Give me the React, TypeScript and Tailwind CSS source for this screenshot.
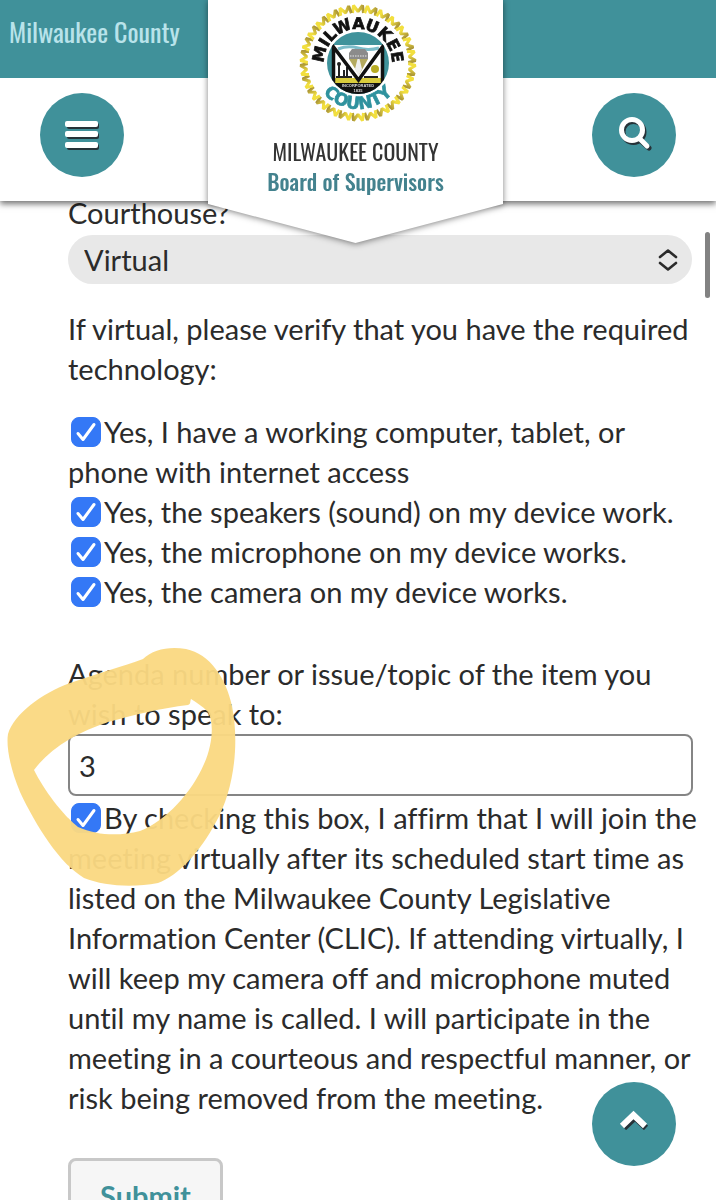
import { ReactNode, useState } from "react";

interface CheckItemProps {
  id: string;
  checked: boolean;
  onToggle: (id: string) => void;
  children: ReactNode;
}

const technology = [
  {
    id: "computer",
    text: "Yes, I have a working computer, tablet, or phone with internet access",
  },
  { id: "speakers", text: "Yes, the speakers (sound) on my device work." },
  { id: "microphone", text: "Yes, the microphone on my device works." },
  { id: "camera", text: "Yes, the camera on my device works." },
];

const CheckItem: React.FC<CheckItemProps> = ({
  id,
  checked,
  onToggle,
  children,
}) => {
  return (
    <div>
      <span className="relative ml-[3px] mr-[3px] inline-block h-[30px] w-[30px] align-[-4px]">
        <input
          className="block h-[30px] w-[30px] appearance-none rounded-lg border border-gray-400 bg-white checked:border-[#3478f6] checked:bg-[#3478f6]"
          id={id}
          type="checkbox"
          checked={checked}
          onChange={() => onToggle(id)}
        />
        {checked && (
          <svg
            className="pointer-events-none absolute inset-0"
            viewBox="0 0 30 30"
            fill="none"
            stroke="#fff"
            strokeWidth="3"
            strokeLinecap="round"
            strokeLinejoin="round"
          >
            <path d="M7 16.5 L12 22.5 L23 7.5" />
          </svg>
        )}
      </span>
      <label htmlFor={id}>{children}</label>
    </div>
  );
};

const RING_COUNT = 26;
const ringAngles = Array.from(
  { length: RING_COUNT },
  (_, index) => (index * 360) / RING_COUNT
);

const CountySeal: React.FC = () => {
  return (
    <svg
      className="h-[120px] w-[120px]"
      viewBox="0 0 120 120"
      role="img"
      aria-label="Milwaukee County seal"
    >
      <defs>
        <path id="arc-top" d="M26 60 A34 34 0 0 1 94 60" />
        <path id="arc-bottom" d="M14 60 A46 46 0 0 0 106 60" />
        <clipPath id="inner">
          <circle cx="60" cy="60" r="31" />
        </clipPath>
        <linearGradient id="gold" x1="0" x2="1" y1="0" y2="0">
          <stop offset="0.3" stopColor="#f2df3e" />
          <stop offset="1" stopColor="#ab9637" />
        </linearGradient>
      </defs>
      {/* gold border made of one "M" repeated around the ring */}
      {ringAngles.map((angle) => (
        <path
          key={angle}
          transform={`rotate(${angle} 60 60)`}
          d="M54.5 10 L55.5 2.5 L60 8.5 L64.5 2.5 L65.5 10"
          fill="none"
          stroke="url(#gold)"
          strokeWidth="3"
          strokeLinejoin="bevel"
        />
      ))}
      <g clipPath="url(#inner)">
        <rect x="29" y="29" width="62" height="62" fill="#3f929b" />
        <rect x="29" y="79" width="62" height="12" fill="#111" />
        <path d="M35 42 H85 V80 H35 Z" fill="#fff" />
        <path
          d="M40 46 Q50 42 60 45 T81 45"
          stroke="#7cbcc9"
          strokeWidth="3"
          fill="none"
        />
        <path d="M51 50 L54 46 H67 L70 50 V56 H51 Z" fill="#8b8b8b" />
        <path
          d="M52 53 H69"
          stroke="#e8e8e8"
          strokeWidth="1"
          strokeDasharray="1.5 1"
        />
        <path d="M51 56 H70 L61 72 Z" fill="#b3a95e" />
        <path d="M59.5 56 L57 66 L60.5 73 L64 66 L61.5 56 Z" fill="#eee" />
        <rect x="36" y="75" width="48" height="5" fill="#d9cc3c" />
        <path
          d="M41 60 V74 M46 67 V74 M49 64 V74 M38 74 H54 M66 74 H80"
          stroke="#222"
          strokeWidth="2"
        />
        <circle cx="41" cy="61" r="2" fill="#222" />
        <circle cx="77" cy="66" r="4" fill="#b8ac25" />
        <path
          d="M35.5 80 V44 L60.5 77 L84.5 44 V80"
          stroke="#111"
          strokeWidth="3.5"
          fill="none"
        />
      </g>
      <g
        fontFamily="Liberation Sans, sans-serif"
        fontSize="4"
        fontWeight="700"
        fill="#ddd"
        textAnchor="middle"
      >
        <text x="60" y="84">
          INCORPORATED
        </text>
        <text x="60" y="89">
          1835
        </text>
      </g>
      <g
        fontFamily="DejaVu Sans, sans-serif"
        fontWeight="700"
        strokeWidth="0.7"
      >
        <text fontSize="16" fill="#111" stroke="#111">
          <textPath href="#arc-top" startOffset="50%" textAnchor="middle">
            MILWAUKEE
          </textPath>
        </text>
        <text fontSize="17" fill="#2f929e" stroke="#2f929e">
          <textPath href="#arc-bottom" startOffset="50%" textAnchor="middle">
            COUNTY
          </textPath>
        </text>
      </g>
    </svg>
  );
};

const Header: React.FC = () => {
  return (
    <header className="relative z-10 shrink-0 bg-white font-['Oswald','Roboto_Condensed',sans-serif] shadow-[0_3px_6px_rgba(0,0,0,0.55)]">
      <div className="flex h-[78px] items-start bg-[#40919a] px-[9px] pt-4">
        <a className="text-[26px] leading-8 text-[#b9e3ea]" href="#county">
          Milwaukee County
        </a>
      </div>
      <div className="flex h-[123px] items-start justify-between px-10 pt-[15px]">
        <button
          className="flex h-[84px] w-[84px] items-center justify-center rounded-full bg-[#40919a]"
          type="button"
          aria-label="Menu"
        >
          <svg className="h-[30px] w-[36px]" viewBox="0 0 36 30">
            <g fill="#263238">
              <rect x="3" y="3" width="32" height="6" rx="2" />
              <rect x="3" y="13" width="32" height="6" rx="2" />
              <rect x="3" y="24" width="32" height="6" rx="2" />
            </g>
            <g fill="#fff">
              <rect x="1" y="1" width="33" height="6" rx="2" />
              <rect x="1" y="11" width="33" height="6" rx="2" />
              <rect x="1" y="22" width="33" height="6" rx="2" />
            </g>
          </svg>
        </button>
        <button
          className="flex h-[84px] w-[84px] items-center justify-center rounded-full bg-[#40919a]"
          type="button"
          aria-label="Search"
        >
          <svg
            className="mb-1 h-9 w-9"
            viewBox="0 0 36 36"
            fill="none"
            strokeWidth="5"
            strokeLinecap="round"
          >
            <g stroke="#263238">
              <circle cx="17.5" cy="17" r="10.5" />
              <path d="M26 27 L33 33" />
            </g>
            <g stroke="#fff">
              <circle cx="16" cy="15" r="10.5" />
              <path d="M24 24 L31 31" />
            </g>
          </svg>
        </button>
      </div>
      <div className="pointer-events-none absolute inset-x-0 top-0 flex justify-center pr-[5px]">
        <div className="drop-shadow-[0_1px_3px_rgba(0,0,0,0.5)]">
          <div className="flex w-[295px] flex-col items-center bg-white pb-[47px] pt-[3px] [clip-path:polygon(0_0,100%_0,100%_84%,50%_100%,0_84%)]">
            <div className="pl-[5px]">
              <CountySeal />
            </div>
            <div className="mt-[13px] text-center text-[22px] leading-[30px]">
              <p className="text-[#333]">MILWAUKEE COUNTY</p>
              <p className="font-medium text-[#43828e]">Board of Supervisors</p>
            </div>
          </div>
        </div>
      </div>
    </header>
  );
};

const HighlightMark: React.FC = () => {
  return (
    <svg
      className="pointer-events-none absolute left-0 top-[640px] z-10 h-[260px] w-[250px]"
      viewBox="0 0 250 260"
      aria-hidden="true"
    >
      <path
        d="M143 19 C153 9 170 6 186 9 C210 14 226 38 232 66 C240 106 233 152 216 182
           C200 212 178 236 158 243 C132 248 104 246 84 238 C60 224 36 186 20 152
           C10 128 6 106 8 94 C14 74 42 53 70 43 C96 34 124 26 143 19 Z
           M188 65 C162 68 134 75 108 82 C78 92 50 108 34 130 C44 150 62 174 78 187
           C98 196 120 196 140 191 C166 181 192 152 204 124 C213 104 214 82 208 72
           C202 66 196 62 191 59 C190 61 191 64 188 65 Z"
        fill="#fad982"
        fillOpacity="0.96"
        fillRule="evenodd"
      />
    </svg>
  );
};

export default function App() {
  const [checked, setChecked] = useState<Record<string, boolean>>({
    computer: true,
    speakers: true,
    microphone: true,
    camera: true,
    affirm: true,
  });
  const [attendance, setAttendance] = useState("virtual");
  const [agenda, setAgenda] = useState("3");

  const handleToggle = (id: string) => {
    setChecked({ ...checked, [id]: !checked[id] });
  };

  return (
    <div className="relative flex h-screen flex-col overflow-hidden bg-white font-['Lato',sans-serif] text-[29px] leading-10 text-[#2b2b2b] [font-variant-ligatures:none]">
      <Header />
      <form
        className="-mt-2 pl-[68px] pr-3"
        onSubmit={(event) => event.preventDefault()}
      >
        <label className="block" htmlFor="attendance">
          Courthouse?
        </label>
        <div className="relative mr-3 mt-[2px]">
          <select
            className="block h-[49px] w-full appearance-none rounded-full bg-[#e8e8e8] px-4"
            id="attendance"
            value={attendance}
            onChange={(event) => setAttendance(event.target.value)}
          >
            <option value="virtual">Virtual</option>
            <option value="in-person">In person</option>
          </select>
          <svg
            className="pointer-events-none absolute right-[14px] top-[13px] h-6 w-5"
            viewBox="0 0 20 24"
            fill="none"
            stroke="#2b2b2b"
            strokeWidth="2.6"
            strokeLinecap="round"
            strokeLinejoin="round"
          >
            <path d="M2 9 L10 2.5 L18 9 M2 15 L10 21.5 L18 15" />
          </svg>
        </div>
        <fieldset className="mt-[25px]">
          <legend>
            If virtual, please verify that you have the required technology:
          </legend>
          <div className="mt-[23px]">
            {technology.map((item) => (
              <CheckItem
                key={item.id}
                id={item.id}
                checked={checked[item.id]}
                onToggle={handleToggle}
              >
                {item.text}
              </CheckItem>
            ))}
          </div>
        </fieldset>
        <label className="mt-[42px] block" htmlFor="agenda">
          Agenda number or issue/topic of the item you wish to speak to:
        </label>
        <div className="mr-[11px]">
          <input
            className="block h-[62px] w-full rounded-lg border-2 border-[#858585] bg-white px-[9px]"
            id="agenda"
            type="text"
            value={agenda}
            onChange={(event) => setAgenda(event.target.value)}
          />
        </div>
        <div className="mt-[2px]">
          <CheckItem
            id="affirm"
            checked={checked.affirm}
            onToggle={handleToggle}
          >
            By checking this box, I affirm that I will join the meeting
            virtually after its scheduled start time as listed on the Milwaukee
            County Legislative Information Center (CLIC). If attending
            virtually, I will keep my camera off and microphone muted until my
            name is called. I will participate in the meeting in a courteous
            and respectful manner, or risk being removed from the meeting.
          </CheckItem>
        </div>
        <button
          className="mt-10 h-[76px] rounded-lg border-[3px] border-[#c8c8c8] bg-[#f6f6f6] px-[29px] font-bold text-[#40919a]"
          type="submit"
        >
          Submit
        </button>
      </form>
      <HighlightMark />
      <div className="absolute right-[6px] top-[232px] h-[66px] w-[5px] rounded-full bg-[#828282]" />
      <button
        className="absolute bottom-[34px] right-10 flex h-[84px] w-[84px] items-center justify-center rounded-full bg-[#40919a]"
        type="button"
        aria-label="Back to top"
      >
        <svg
          className="mb-2 h-5 w-[30px]"
          viewBox="0 0 30 20"
          fill="none"
          strokeWidth="6"
        >
          <path d="M5 18 L16 7.5 L27 18" stroke="#263238" />
          <path d="M3 16 L14.5 5 L26 16" stroke="#fff" />
        </svg>
      </button>
    </div>
  );
}
